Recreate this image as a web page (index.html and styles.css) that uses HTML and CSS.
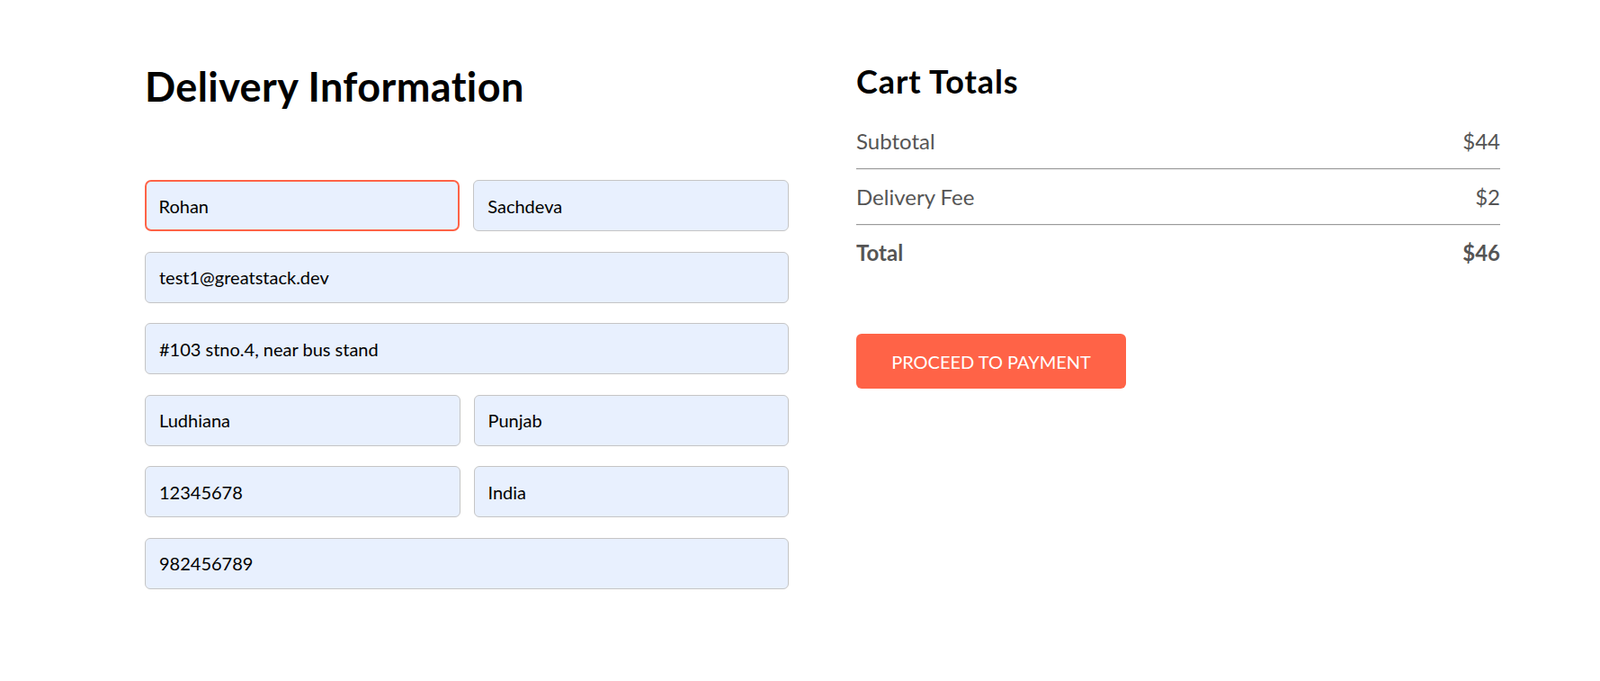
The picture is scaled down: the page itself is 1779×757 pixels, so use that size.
FILE: index.html
```html
<!DOCTYPE html>
<html lang="en">
<head>
<meta charset="utf-8">
<title>Place Order</title>
<link rel="stylesheet" href="styles.css">
</head>
<body>
<form class="place-order">
  <div class="place-order-left">
    <p class="title">Delivery Information</p>
    <div class="multi-fields">
      <input class="field focused" type="text" value="Rohan" placeholder="First name">
      <input class="field" type="text" value="Sachdeva" placeholder="Last name">
    </div>
    <input class="field" type="email" value="test1@greatstack.dev" placeholder="Email address">
    <input class="field" type="text" value="#103 stno.4, near bus stand" placeholder="Street">
    <div class="multi-fields">
      <input class="field" type="text" value="Ludhiana" placeholder="City">
      <input class="field" type="text" value="Punjab" placeholder="State">
    </div>
    <div class="multi-fields">
      <input class="field" type="text" value="12345678" placeholder="Zip code">
      <input class="field" type="text" value="India" placeholder="Country">
    </div>
    <input class="field last" type="text" value="982456789" placeholder="Phone">
  </div>
  <div class="place-order-right">
    <div class="cart-total">
      <h2 class="cart-title">Cart Totals</h2>
      <div class="cart-rows">
        <div class="cart-total-details">
          <p>Subtotal</p>
          <p>$44</p>
        </div>
        <hr class="divider">
        <div class="cart-total-details">
          <p>Delivery Fee</p>
          <p>$2</p>
        </div>
        <hr class="divider">
        <div class="cart-total-details strong">
          <b>Total</b>
          <b>$46</b>
        </div>
      </div>
      <button class="pay-btn" type="button">PROCEED TO PAYMENT</button>
    </div>
  </div>
</form>
</body>
</html>
```

FILE: styles.css
```css
* {
  box-sizing: border-box;
}

body {
  margin: 0;
  background: #ffffff;
  font-family: "Lato", "Liberation Sans", sans-serif;
}

.place-order {
  display: flex;
  align-items: flex-start;
  gap: 75px;
  padding: 68px 111px 0 161px;
}

.place-order-left {
  flex: 1 1 0;
  min-width: 0;
}

.place-order-right {
  flex: 1 1 0;
  min-width: 0;
}

.title {
  margin: 0 0 76px 0;
  font-size: 45px;
  line-height: 56px;
  font-weight: 700;
  letter-spacing: 0.4px;
  color: #000;
}

.multi-fields {
  display: flex;
  gap: 15px;
}

.field {
  display: block;
  width: 100%;
  height: 57px;
  margin: 0 0 22.6px 0;
  padding: 0 15px;
  border: 1px solid #c5c5c5;
  border-radius: 6px;
  background: #e8f0fe;
  font-family: "Lato", "Liberation Sans", sans-serif;
  font-size: 20px;
  color: #000;
  outline: none;
}

.field.focused {
  border: 2.5px solid #ff6347;
  border-radius: 7px;
  padding: 0 13.5px;
}

.cart-total {
  display: flex;
  flex-direction: column;
  align-items: flex-start;
}

.cart-title {
  margin: 0 0 30px 0;
  font-size: 36px;
  line-height: 44px;
  font-weight: 700;
  letter-spacing: 0.9px;
  color: #000;
}

.cart-rows {
  width: 100%;
}

.cart-total-details {
  display: flex;
  justify-content: space-between;
  color: #555;
  font-size: 24px;
  line-height: 30px;
}

.cart-total-details p {
  margin: 0;
}

.cart-total-details b {
  font-weight: 700;
}

.divider {
  margin: 15px 0;
  height: 0;
  border: none;
  border-top: 1px solid #9a9a9a;
  border-bottom: 1px solid #ededed;
}

.pay-btn {
  margin-top: 75px;
  width: 300px;
  height: 61px;
  border: none;
  border-radius: 6px;
  background: #ff6347;
  color: #fff;
  font-family: "Lato", "Liberation Sans", sans-serif;
  font-size: 20px;
  cursor: pointer;
}
```
